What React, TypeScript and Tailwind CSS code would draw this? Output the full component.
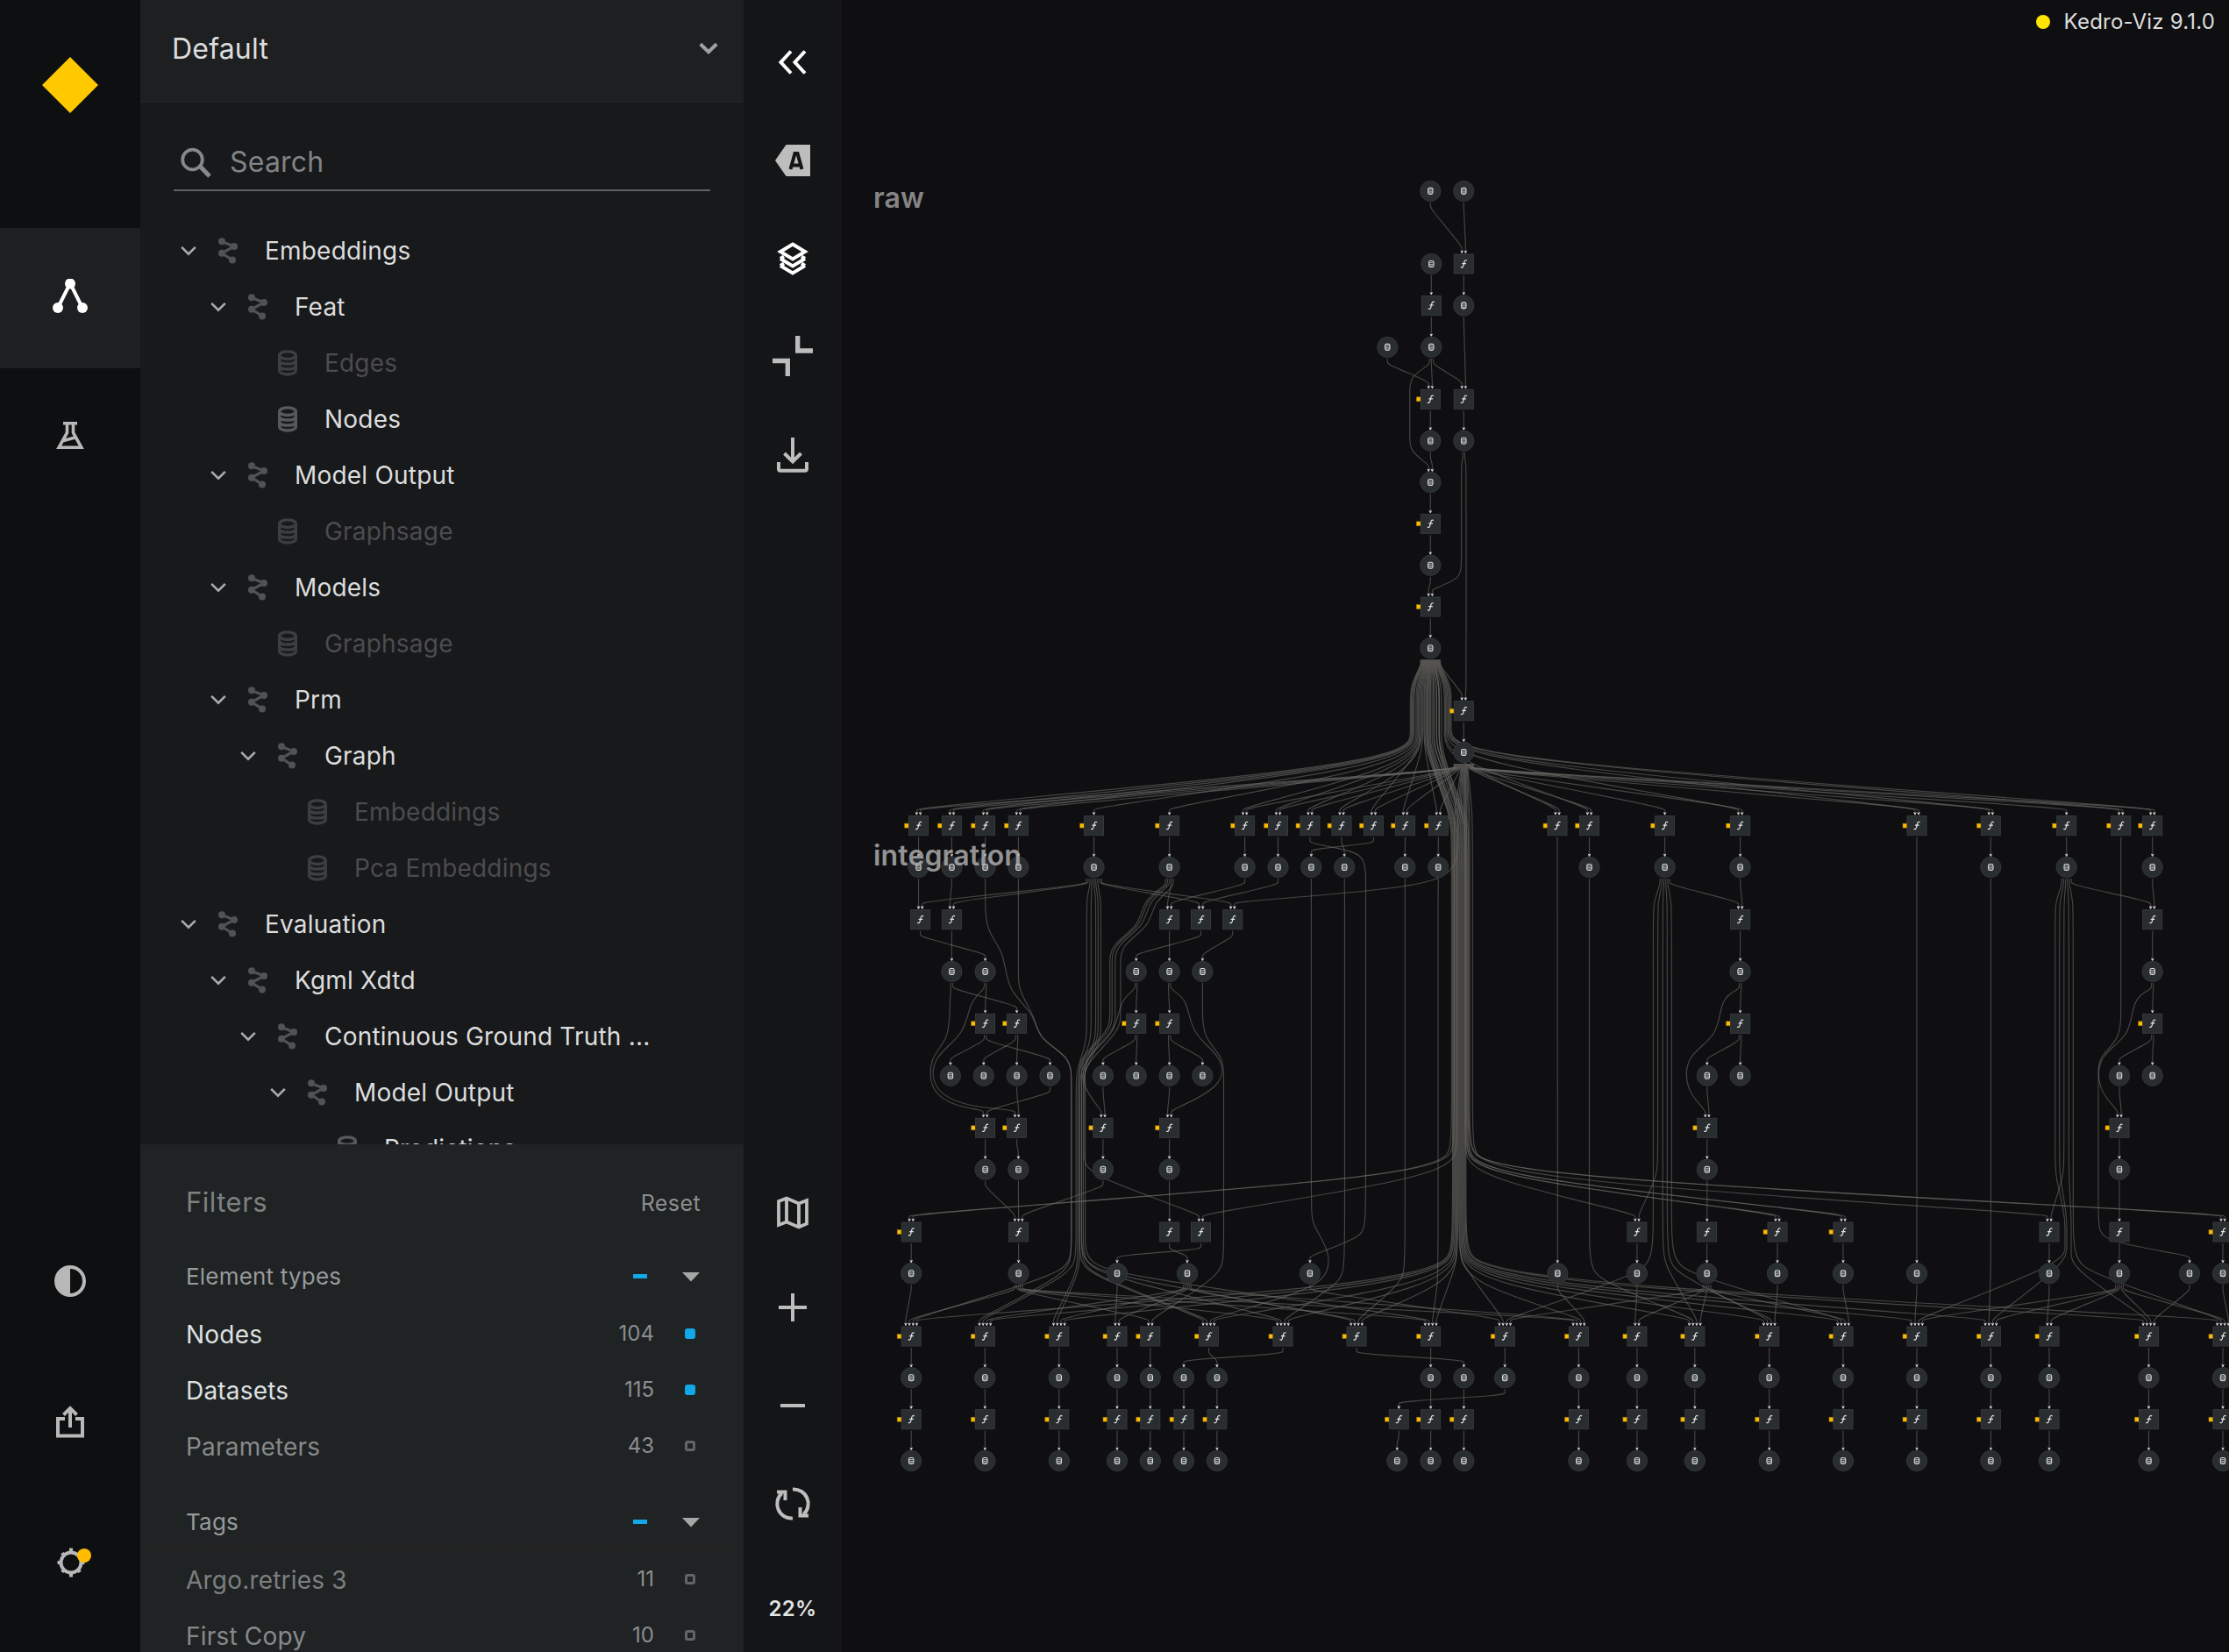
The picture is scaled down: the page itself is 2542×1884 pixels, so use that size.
import React from "react";

/* ---------- Pipeline graph data ---------- */

type Pt = [number, number];
type Edge = { x1: number; r1: number; x2: number; r2: number; via: Pt[] };

const ROWS = [
  217.9, 301, 348.4, 395.9, 455.3, 502.7, 550, 597.3, 644.7, 692, 739.3, 810.7, 858, 941.6, 989, 1048.7, 1108,
  1167.3, 1226.7, 1286.3, 1333.7, 1405, 1452.3, 1524, 1571.3, 1618.7, 1666,
];

const RIGHT = [1800.4, 1866.9, 1932.8, 2017.7, 2102, 2186, 2270.4, 2337, 2450.5, 2535];
const TAIL = [1039.2, 1123.3, 1207.8, 1274, 1311.8];

const DATASETS: Record<number, number[]> = {
  0: [1631.3, 1669.3],
  1: [1632.3],
  2: [1669.3],
  3: [1582.3, 1632.3],
  5: [1631.3, 1669.3],
  6: [1631.3],
  8: [1631.3],
  10: [1631.3],
  12: [1669.3],
  14: [1047.5, 1085.4, 1123.6, 1161.4, 1247.5, 1333.6, 1419.6, 1457.5, 1495.4, 1533.2, 1602.3, 1640.2, 1812.5, 1898.6, 1984.6, 2270.3, 2356.7, 2454.7],
  16: [1085.4, 1123.6, 1295.7, 1333.6, 1371.4, 1984.6, 2454.7],
  18: [1083.9, 1121.8, 1159.6, 1197.5, 1257.9, 1295.7, 1333.6, 1371.4, 1946.8, 1984.6, 2417, 2454.7],
  20: [1123.6, 1161.4, 1257.9, 1333.6, 1946.8, 2417],
  22: [1039.2, 1161.6, 1274, 1354, 1493.9, 1776.3, 1866.9, 1946.6, 2027, 2102, 2186, 2337, 2417, 2497, 2535],
  24: [...TAIL, 1350, 1387.9, 1631.6, 1669.4, 1716.2, ...RIGHT],
  26: [...TAIL, 1350, 1387.9, 1593.3, 1631.6, 1669.4, ...RIGHT],
};

const PLAIN_TASKS: Record<number, number[]> = {
  1: [1669.3],
  2: [1632.3],
  4: [1669.3],
  15: [1049.6, 1085.4, 1333.6, 1369.6, 1405.7, 1984.6, 2454.7],
  21: [1161.6, 1333.7, 1369.5, 1866.9, 1946.6, 2337, 2417],
};

const PARAM_TASKS: Record<number, number[]> = {
  4: [1631.3],
  7: [1631.3],
  9: [1631.3],
  11: [1669.3],
  13: [1047.5, 1085.4, 1123.6, 1161.4, 1247.5, 1333.6, 1419.6, 1457.5, 1494, 1530, 1566.4, 1602.5, 1640.4, 1776, 1812.5, 1898.6, 1984.6, 2186, 2270.3, 2356.7, 2418.7, 2454.7],
  17: [1123.6, 1159.6, 1295.7, 1333.6, 1984.6, 2454.7],
  19: [1123.6, 1159.6, 1257.9, 1333.6, 1946.8, 2417],
  21: [1039.2, 2027, 2102, 2535],
  23: [...TAIL, 1378.4, 1463, 1547, 1631.6, 1716.2, ...RIGHT],
  25: [...TAIL, 1350, 1387.9, 1595.3, 1631.6, 1669.4, ...RIGHT],
};

const run = (x: number, y1: number, y2: number): Pt[] => {
  const d = Math.min(18, (y2 - y1) / 3);
  return [[x, y1], [x, y1 + d], [x, y2 - d], [x, y2]];
};

// soft shoulder between a vertical run and a distant target
const bend = (x: number, tx: number, y: number, k: number): Pt[] => (Math.abs(tx - x) > 90 ? [[x + (tx - x) * k, y]] : []);

const edges: Edge[] = [];
const e = (x1: number, r1: number, x2: number, r2: number, via: Pt[] = []) => edges.push({ x1, r1, x2, r2, via });

// head of the pipeline
e(1631.3, 0, 1669.3, 1);
e(1669.3, 0, 1669.3, 1);
e(1632.3, 1, 1632.3, 2);
e(1669.3, 1, 1669.3, 2);
e(1632.3, 2, 1632.3, 3);
e(1582.3, 3, 1631.3, 4);
e(1632.3, 3, 1631.3, 4);
e(1632.3, 3, 1669.3, 4);
e(1632.3, 3, 1631.3, 6, run(1607.7, 430, 515));
e(1669.3, 2, 1669.3, 4);
e(1631.3, 4, 1631.3, 5);
e(1669.3, 4, 1669.3, 5);
e(1631.3, 5, 1631.3, 6);
e(1631.3, 6, 1631.3, 7);
e(1631.3, 7, 1631.3, 8);
e(1631.3, 8, 1631.3, 9);
e(1669.3, 5, 1631.3, 9, run(1666.6, 530, 660));
e(1669.3, 5, 1669.3, 11, run(1672, 530, 780));
e(1631.3, 9, 1631.3, 10);
e(1631.3, 10, 1669.3, 11);
e(1669.3, 11, 1669.3, 12);

// fan-out towards the model tasks
const FAN_LEFT = [1047.5, 1085.4, 1123.6, 1161.4, 1247.5, 1333.6, 1419.6, 1457.5, 1494, 1530, 1566.4, 1602.5, 1640.4];
const FAN_RIGHT = [1776, 1812.5, 1984.6, 2186, 2270.3, 2418.7, 2454.7];
const LATE = [1039.2, 1123.3, 1207.8, 1378.4, 1463, 1547, 1631.6, 1716.2, 1800.4, 1932.8, 2017.7, 2102, 2186, 2270.4, 2450.5, 2535];
const MID = [1039.2, 1039.2, 1369.5, 1866.9, 2027, 2027, 2102, 2102, 2535, 2535];

FAN_LEFT.forEach((x, i) => {
  const rx = i < 5 ? 1608.4 + i * 1.1 : 1608.4 + i * 1.3;
  e(1631.3, 10, x, 13, [...run(rx, 782, 854), ...bend(rx, x, 879, 0.19)]);
});
[...FAN_RIGHT].reverse().forEach((x, i) => {
  const rx = 1655 - i * 1.3;
  e(1631.3, 10, x, 13, [...run(rx, 782, 850), ...bend(rx, x, 873, 0.16)]);
});
[...FAN_LEFT.filter((x) => x !== 1247.5 && x !== 1333.6), ...FAN_RIGHT, 1898.6, 2356.7].forEach((x) => e(1669.3, 12, x, 13));

LATE.forEach((x, i) => {
  const rx = 1656.5 + i * 1.02;
  const tail = bend(rx, x, 1466, 0.14);
  if (i % 2 === 0 || i < 5) e(1631.3, 10, x, 23, [...run(1625 + i * 1.35, 782, 856), ...run(rx, 935, 1438), ...tail]);
  else e(1669.3, 12, x, 23, [...run(rx, 930, 1438), ...tail]);
});
MID.forEach((x, i) => {
  const rx = i < 3 ? 1655.4 + i * 3 : 1668 + i * 0.9;
  const tail = bend(rx, x, 1345, 0.14);
  if (i % 2 === 0) e(1631.3, 10, x, 21, [...run(1628 + i * 1.7, 782, 856), ...run(rx, 935, 1322), ...tail]);
  else e(1669.3, 12, x, 21, [...run(rx, 930, 1322), ...tail]);
});
e(1669.3, 12, 2337, 21, [...run(1679.3, 930, 1322), ...bend(1679.3, 2337, 1348, 0.14)]);
e(1631.3, 10, 1405.7, 15, [...run(1641, 782, 856), [1662, 915], [1663, 950], [1663, 990], [1630, 1012]]);

// tasks to their outputs
[1047.5, 1085.4, 1123.6, 1161.4, 1247.5, 1333.6, 1419.6, 1457.5, 1602.3, 1640.2, 1812.5, 1898.6, 1984.6, 2270.3, 2356.7, 2454.7].forEach((x) =>
  e(x === 1602.3 ? 1602.5 : x === 1640.2 ? 1640.4 : x, 13, x, 14),
);
e(1494, 13, 1493.9, 22, [[1530, 968], [1557.5, 975], ...run(1557.5, 1005, 1410)]);
e(1530, 13, 1533.2, 14);
e(1566.4, 13, 1495.4, 14);
e(1776, 13, 1776.3, 22);
e(2186, 13, 2186, 22);
e(2418.7, 13, 2497, 22, [[2418.7, 1100], [2418.7, 1150], [2418.7, 1185], [2393, 1205], ...run(2393, 1225, 1415)]);

e(1047.5, 14, 1049.6, 15);
e(1085.4, 14, 1085.4, 15);
e(1123.6, 14, 1039.2, 23, [[1123.6, 1020], [1123.6, 1062], [1146, 1085], [1148, 1130], [1180, 1155], [1183, 1185], [1221.8, 1205], ...run(1221.8, 1235, 1450)]);
e(1161.4, 14, 1123.3, 23, [[1161.4, 1060], [1161.4, 1110], [1161.4, 1130], [1181, 1160], [1184, 1185], [1221.8, 1205], ...run(1221.8, 1235, 1450)]);
e(1247.5, 14, 1049.6, 15);
e(1247.5, 14, 1085.4, 15);
e(1247.5, 14, 1369.6, 15);
e(1247.5, 14, 1405.7, 15);
([[1239.3, 1227.2, 1123.3], [1244.3, 1229.2, 1207.8], [1249.6, 1231.4, 1207.8], [1252.3, 1233.4, 1378.4], [1255.4, 1235.4, 1463]] as const).forEach(([a, b, t]) =>
  e(1247.5, 14, t, 23, [...run(a, 1025, 1188), ...run(b, 1222, 1450)]),
);
([[1265.7, 1231, 1378.4], [1268.2, 1233.6, 1547], [1271.8, 1237.6, 1631.6]] as const).forEach(([a, b, t]) => {
  const s = a - 1270;
  e(1333.6, 14, t, 23, [[1326 + s, 1014], [1307 + s, 1030], [1304 + s, 1056], [a, 1078], ...run(a, 1100, 1175), [b, 1205], ...run(b, 1225, 1450)]);
});
e(1333.6, 14, 1369.5, 21, [[1335, 1014], [1315, 1030], [1312, 1056], [1277.9, 1078], ...run(1277.9, 1100, 1175), ...run(1236, 1215, 1338)]);
e(1333.6, 14, 1333.6, 15);
e(1419.6, 14, 1333.6, 15);
e(1457.5, 14, 1369.6, 15);
e(1495.4, 14, 1378.4, 23, [...run(1495.4, 1030, 1395), [1516, 1425], [1516, 1452], [1494, 1472]]);
e(1533.2, 14, 1463, 23, run(1533.5, 1030, 1460));
e(1602.3, 14, 1547, 23, run(1602.3, 1030, 1460));
e(1640.2, 14, 1631.6, 23, run(1640, 1030, 1460));
e(1812.5, 14, 1932.8, 23, run(1812.5, 1030, 1456));
e(1898.6, 14, 1984.6, 15);
e(1898.6, 14, 1716.2, 23, run(1885.4, 1030, 1448));
e(1898.6, 14, 1866.9, 21, run(1890.6, 1030, 1340));
e(1898.6, 14, 1932.8, 23, run(1896.2, 1030, 1440));
e(1898.6, 14, 2017.7, 23, run(1901.3, 1030, 1448));
e(1898.6, 14, 2102, 23, run(1906.3, 1030, 1448));
e(1984.6, 14, 1984.6, 15);
e(2270.3, 14, 2270.4, 23, run(2270.4, 1030, 1450));
e(2356.7, 14, 2454.7, 15);
e(2356.7, 14, 2186, 23, [...run(2343.7, 1030, 1340), ...run(2355, 1385, 1440)]);
e(2356.7, 14, 2270.4, 23, [...run(2348.7, 1030, 1340), ...run(2357, 1385, 1440)]);
e(2356.7, 14, 2337, 21, run(2353.8, 1030, 1340));
e(2356.7, 14, 2450.5, 23, [...run(2359.3, 1030, 1340), ...run(2362, 1385, 1446)]);
e(2356.7, 14, 2535, 23, run(2364.3, 1030, 1446));
e(2454.7, 14, 2454.7, 15);

e(1049.6, 15, 1123.6, 16);
e(1085.4, 15, 1085.4, 16);
e(1333.6, 15, 1333.6, 16);
e(1369.6, 15, 1295.7, 16);
e(1405.7, 15, 1371.4, 16);

e(1085.4, 16, 1159.6, 17);
e(1085.4, 16, 1123.6, 19, [[1083, 1145], [1083, 1185], [1060, 1205], [1060, 1245], [1090, 1262]]);
e(1123.6, 16, 1123.6, 17);
e(1123.6, 16, 1159.6, 19, [[1105, 1143], [1101, 1180], [1062.5, 1205], [1062.5, 1243], [1100, 1262]]);
e(1295.7, 16, 1295.7, 17);
e(1295.7, 16, 1257.9, 19, [[1276, 1142], [1274, 1178], [1234, 1208], [1234, 1240]]);
e(1333.6, 16, 1333.6, 17);
e(1333.6, 16, 1333.6, 19, [[1355, 1140], [1358, 1180], [1395.5, 1205], [1395.5, 1240]]);
e(1371.4, 16, 1311.8, 23, [[1371.4, 1150], [1371.4, 1183], [1395.5, 1205], ...run(1395.5, 1230, 1452)]);
e(1123.6, 17, 1083.9, 18);
e(1123.6, 17, 1197.5, 18);
e(1159.6, 17, 1121.8, 18);
e(1159.6, 17, 1159.6, 18);
e(1295.7, 17, 1257.9, 18);
e(1295.7, 17, 1295.7, 18);
e(1333.6, 17, 1333.6, 18);
e(1333.6, 17, 1371.4, 18);
e(1197.5, 18, 1123.6, 19);
e(1159.6, 18, 1159.6, 19);
e(1257.9, 18, 1257.9, 19);
e(1333.6, 18, 1333.6, 19);
e(1123.6, 19, 1123.6, 20);
e(1159.6, 19, 1161.4, 20);
e(1257.9, 19, 1257.9, 20);
e(1333.6, 19, 1333.6, 20);
e(1123.6, 20, 1161.6, 21);
e(1161.4, 20, 1161.6, 21);
e(1257.9, 20, 1161.6, 21);
e(1333.6, 20, 1333.7, 21);

// the two evaluation branches on the right
[1984.6, 2454.7].forEach((x) => {
  const l = x - 37.8;
  e(x, 15, x, 16);
  e(x, 16, x, 17);
  e(x, 16, l, 19, [[x - 23, 1138], [x - 24, 1182], [x - 62.5, 1203], [x - 62.5, 1243]]);
  e(x, 17, l, 18);
  e(x, 17, x, 18);
  const s = x === 1984.6 ? 1946.8 : 2417;
  e(s, 18, s, 19);
  e(s, 19, s, 20);
  e(s, 20, s, 21);
});

// collection of predictions
[1039.2, 1161.6, 1866.9, 1946.6, 2027, 2102, 2337, 2417, 2535].forEach((x) => e(x, 21, x, 22));
e(1333.7, 21, 1354, 22);
e(1369.5, 21, 1274, 22);
const fan = (x: number, targets: number[]) => targets.forEach((t) => e(x, 22, t, 23));
fan(1039.2, [1039.2]);
fan(1161.6, [1039.2, 1311.8, 1463, 1631.6, 1800.4]);
fan(1274, [1274]);
fan(1354, [1123.3, 1207.8, 1274, 1547, 1800.4]);
fan(1493.9, [1716.2]);
fan(1776.3, [1800.4]);
fan(1866.9, [1866.9]);
fan(1946.6, [1716.2, 1866.9, 1932.8, 2017.7, 2102]);
fan(2027, [2017.7]);
fan(2102, [2102]);
fan(2186, [2186]);
fan(2337, [2337]);
fan(2417, [2186, 2270.4, 2337, 2450.5, 2535]);
fan(2497, [2450.5]);
fan(2535, [2535]);
[...TAIL, 1631.6, 1716.2, ...RIGHT].forEach((x) => e(x, 23, x, 24));
e(1378.4, 23, 1387.9, 24);
e(1463, 23, 1350, 24);
e(1547, 23, 1669.4, 24);
[...TAIL, 1350, 1387.9, 1631.6, 1669.4, ...RIGHT].forEach((x) => {
  e(x, 24, x, 25);
  e(x, 25, x, 26);
});
e(1716.2, 24, 1595.3, 25);
e(1595.3, 25, 1593.3, 26);

/* ---------- Edge routing ---------- */

const f1 = (n: number) => Math.round(n * 10) / 10;

function basis(p: Pt[]): string {
  let d = `M${f1(p[0][0])},${f1(p[0][1])}`;
  d += `L${f1((5 * p[0][0] + p[1][0]) / 6)},${f1((5 * p[0][1] + p[1][1]) / 6)}`;
  const q = [...p, p[p.length - 1]];
  for (let i = 2; i < q.length; i++) {
    const [a, b, c] = [q[i - 2], q[i - 1], q[i]];
    d += `C${f1((2 * a[0] + b[0]) / 3)},${f1((2 * a[1] + b[1]) / 3)} ${f1((a[0] + 2 * b[0]) / 3)},${f1((a[1] + 2 * b[1]) / 3)} ${f1((a[0] + 4 * b[0] + c[0]) / 6)},${f1((a[1] + 4 * b[1] + c[1]) / 6)}`;
  }
  const l = p[p.length - 1];
  return d + `L${f1(l[0])},${f1(l[1])}`;
}

function spread(key: (k: Edge) => string, angle: (k: Edge) => number, gap: number, max: number) {
  const groups = new Map<string, Edge[]>();
  edges.forEach((k) => groups.set(key(k), [...(groups.get(key(k)) ?? []), k]));
  const out = new Map<Edge, number>();
  groups.forEach((g) => {
    g.sort((a, b) => angle(a) - angle(b));
    const s = g.length > 1 ? Math.min(gap, max / (g.length - 1)) : 0;
    g.forEach((k, i) => out.set(k, (i - (g.length - 1) / 2) * s));
  });
  return out;
}

const srcOffset = spread(
  (k) => `${Math.round(k.x1)}:${k.r1}`,
  (k) => {
    const n = k.via[0] ?? [k.x2, ROWS[k.r2]];
    return Math.atan2(n[0] - k.x1, n[1] - ROWS[k.r1]) + (k.x2 - k.x1) * 1e-6;
  },
  2.2,
  22.5,
);
const dstOffset = spread(
  (k) => `${Math.round(k.x2)}:${k.r2}`,
  (k) => {
    const n = k.via[k.via.length - 1] ?? [k.x1, ROWS[k.r1]];
    return Math.atan2(n[0] - k.x2, ROWS[k.r2] - n[1]);
  },
  4.2,
  16,
);

const DRAWN = edges.map((k) => {
  const sx = k.x1 + (srcOffset.get(k) ?? 0);
  const tx = k.x2 + (dstOffset.get(k) ?? 0);
  const y1 = ROWS[k.r1] + 13;
  const y2 = ROWS[k.r2] - 14.5;
  const p: Pt[] = [[sx, y1], [sx, y1 + 4], [sx, y1 + 7], ...k.via, [tx, y2 - 6], [tx, y2 - 3], [tx, y2]];
  return { d: basis(p), tx, ty: y2 };
});

const LINES = DRAWN.map((k) => k.d);
const ARROWS = DRAWN.map((k) => `M${f1(k.tx - 1.8)},${f1(k.ty - 1)}l1.8,0.9l1.8,-0.9l-1.3,3.2h-1z`).join("");

const flat = (m: Record<number, number[]>) => Object.entries(m).flatMap(([r, xs]) => xs.map((x): Pt => [x, ROWS[Number(r)]]));

function Task({ at: [x, y], params }: { at: Pt; params?: boolean }) {
  return (
    <g transform={`translate(${x} ${y})`}>
      {params && <rect x="-16" y="-2.5" width="5" height="5" fill="#ffbc00" stroke="#8a6a10" strokeWidth="0.6" />}
      <rect x="-11" y="-11" width="22" height="22" fill="#292d30" stroke="#36393b" strokeWidth="1" />
      <path d="M-3.4 3.6C-1.6 4.8-.7 3.4-.3 1.4L.5-2C.9-4 2-4.8 3.6-3.8M-2 -.4H2.6" fill="none" stroke="#e4e5e6" strokeWidth="1.2" />
    </g>
  );
}

function Dataset({ at: [x, y] }: { at: Pt }) {
  return (
    <g transform={`translate(${x} ${y})`}>
      <circle r="11.7" fill="#292d30" stroke="#36393b" strokeWidth="0.8" />
      <rect x="-2.7" y="-3.5" width="5.4" height="7" rx="1.8" fill="none" stroke="#dfe0e1" strokeWidth="1.1" />
      <path d="M-2.4 -1.4H2.4M-2.4 .4H2.4M-2.4 2H2.4" stroke="#c9cacb" strokeWidth="0.8" />
    </g>
  );
}

function Graph() {
  return (
    <svg className="absolute inset-0" width="1582" height="1884" viewBox="960 0 1582 1884">
      <g fill="none" stroke="#6d6b68" strokeOpacity="0.6" strokeWidth="1.15">
        {LINES.map((d, i) => (
          <path key={i} d={d} />
        ))}
      </g>
      <path d={ARROWS} fill="#d8d9da" />
      {flat(DATASETS).map((p, i) => (
        <Dataset key={i} at={p} />
      ))}
      {flat(PLAIN_TASKS).map((p, i) => (
        <Task key={i} at={p} />
      ))}
      {flat(PARAM_TASKS).map((p, i) => (
        <Task key={i} at={p} params />
      ))}
    </svg>
  );
}

/* ---------- Sidebar ---------- */

type Item = { label: string; depth: number; leaf?: boolean; off?: boolean };

const TREE: Item[] = [
  { label: "Embeddings", depth: 0 },
  { label: "Feat", depth: 1 },
  { label: "Edges", depth: 2, leaf: true, off: true },
  { label: "Nodes", depth: 2, leaf: true },
  { label: "Model Output", depth: 1 },
  { label: "Graphsage", depth: 2, leaf: true, off: true },
  { label: "Models", depth: 1 },
  { label: "Graphsage", depth: 2, leaf: true, off: true },
  { label: "Prm", depth: 1 },
  { label: "Graph", depth: 2 },
  { label: "Embeddings", depth: 3, leaf: true, off: true },
  { label: "Pca Embeddings", depth: 3, leaf: true, off: true },
  { label: "Evaluation", depth: 0 },
  { label: "Kgml Xdtd", depth: 1 },
  { label: "Continuous Ground Truth ...", depth: 2 },
  { label: "Model Output", depth: 3 },
  { label: "Predictions", depth: 4, leaf: true },
];

const PipelineIcon = () => (
  <svg width="24" height="32" viewBox="0 0 24 32" fill="#505254" stroke="#505254" className="shrink-0">
    <path d="M5 5.5L19 11L5 18.7L17 26.5" fill="none" strokeWidth="3.2" />
    <g stroke="none">
      <circle cx="5" cy="5.2" r="4" />
      <circle cx="19" cy="11" r="4" />
      <circle cx="5" cy="18.8" r="4" />
      <circle cx="17" cy="26.6" r="4" />
    </g>
  </svg>
);

const DatabaseIcon = ({ off }: { off?: boolean }) => (
  <svg width="24" height="32" viewBox="0 0 24 32" fill="none" stroke={off ? "#3c3e3f" : "#57595b"} strokeWidth="3.4" className="shrink-0">
    <ellipse cx="12" cy="7.2" rx="9.3" ry="4.3" />
    <path d="M2.7 7.2V24.5C2.7 27.2 6.8 29 12 29S21.3 27.2 21.3 24.5V7.2M2.7 13.2C2.7 15.6 6.8 17 12 17S21.3 15.6 21.3 13.2M2.7 19.2C2.7 21.6 6.8 23 12 23S21.3 21.6 21.3 19.2" />
  </svg>
);

function TreeRow({ item }: { item: Item }) {
  return (
    <div className="flex h-16 shrink-0 items-center pl-[46px]">
      <div className="flex items-center" style={{ marginLeft: item.depth * 34 }}>
        <span className="flex w-[42px] shrink-0">
          {!item.leaf && (
            <svg width="18" height="12" viewBox="0 0 18 12" fill="none" stroke="#aaabac" strokeWidth="2.6">
              <path d="M1.2 1.8L9 9.6L16.8 1.8" />
            </svg>
          )}
        </span>
        {item.leaf ? <DatabaseIcon off={item.off} /> : <PipelineIcon />}
        <span className={`ml-[30px] whitespace-nowrap text-[28px] leading-none tracking-[0.2px] ${item.off ? "text-[#4b4c4e]" : "text-[#dcddde]"}`}>{item.label}</span>
      </div>
    </div>
  );
}

function FilterGroup({ title }: { title: string }) {
  return (
    <div className="flex h-[68px] shrink-0 items-center bg-linear-to-b from-[#1f2324] from-60% to-[#222223] pl-[52px] pr-[50px]">
      <span className="flex-1 pt-[2px] text-[26px] leading-none tracking-[0.2px] text-[#979a9a]">{title}</span>
      <span className="mr-10 h-[5px] w-4 bg-[#12a8e8]" />
      <svg width="20" height="11" viewBox="0 0 20 11" fill="#a5a7a7" className="mt-[2px]">
        <path d="M0 0H20L10 10.5Z" />
      </svg>
    </div>
  );
}

function FilterRow({ label, count, on, dim }: { label: string; count: string; on?: boolean; dim?: boolean }) {
  const tone = on ? "text-[#dfe0e0]" : dim ? "text-[#7c7f7f]" : "text-[#878a8a]";
  return (
    <div className="flex h-16 shrink-0 items-center pl-[52px] pr-[55px]">
      <span className={`flex-1 pt-[2px] text-[28px] leading-none tracking-[0.2px] ${tone}`}>{label}</span>
      <span className="mr-[35px] pb-px text-[24px] leading-none text-[#8b8e8e]">{count}</span>
      <span className={on ? "size-3 rounded-[3px] bg-[#12a8e8]" : "size-3 rounded-[3px] border-[3px] border-[#626565]"} />
    </div>
  );
}

function Sidebar() {
  return (
    <section className="flex h-full w-[688px] shrink-0 flex-col bg-[#18191b]">
      <header className="flex h-[117px] shrink-0 items-start justify-between border-b-2 border-[#222325] bg-[#1e1f21] pl-[36px] pr-[29px]">
        <span className="mt-10 text-[32px] leading-8 tracking-[0.2px] text-[#dcddde]">Default</span>
        <svg width="22" height="14" viewBox="0 0 22 14" fill="none" stroke="#a0a1a2" strokeWidth="4" className="mt-12">
          <path d="M1.8 2.2L11 11.2L20.2 2.2" />
        </svg>
      </header>
      <div className="ml-[38px] flex h-[101px] w-[612px] shrink-0 items-end border-b-2 border-[#606163] pb-[13px]">
        <svg width="38" height="36" viewBox="0 0 38 36" fill="none" stroke="#87888a" className="ml-[6px]">
          <circle cx="15.5" cy="15" r="11.3" strokeWidth="3.8" />
          <path d="M23.5 22L35 34" strokeWidth="5" />
        </svg>
        <span className="ml-[20px] text-[32px] leading-9 tracking-[0.2px] text-[#828385]">Search</span>
      </div>
      <div className="flex h-[1087px] shrink-0 flex-col overflow-hidden pt-9">
        {TREE.map((t, i) => (
          <TreeRow key={i} item={t} />
        ))}
      </div>
      <div className="flex flex-1 flex-col overflow-hidden bg-[#1f2324]">
        <div className="mt-[38px] flex h-[54px] shrink-0 items-center justify-between pl-[52px] pr-[49px]">
          <span className="text-[31px] leading-none tracking-[0.5px] text-[#7d8181]">Filters</span>
          <span className="pt-[4px] text-[25px] leading-none tracking-[0.4px] text-[#8b8e8e]">Reset</span>
        </div>
        <div className="h-[24px] shrink-0" />
        <FilterGroup title="Element types" />
        <FilterRow label="Nodes" count="104" on />
        <FilterRow label="Datasets" count="115" on />
        <FilterRow label="Parameters" count="43" />
        <div className="h-[20px] shrink-0" />
        <FilterGroup title="Tags" />
        <FilterRow label="Argo.retries 3" count="11" dim />
        <FilterRow label="First Copy" count="10" />
      </div>
    </section>
  );
}

/* ---------- Navigation rail ---------- */

function NavCell({ children, className = "" }: { children: React.ReactNode; className?: string }) {
  return <div className={`flex size-40 shrink-0 items-center justify-center ${className}`}>{children}</div>;
}

function NavRail() {
  return (
    <nav className="flex h-full w-40 shrink-0 flex-col bg-[#0e0f11]">
      <div className="flex h-[260px] shrink-0 justify-center pt-[65px]">
        <svg width="64" height="64" viewBox="0 0 64 64">
          <path d="M32 0L64 32L32 64L0 32Z" fill="#ffc900" />
        </svg>
      </div>
      <NavCell className="bg-[#1d1f21]">
        <svg width="44" height="44" viewBox="0 0 44 44" fill="#fff" stroke="#fff">
          <path d="M8 33L22 5L36 33" fill="none" strokeWidth="4" />
          <g stroke="none">
            <circle cx="22" cy="5.5" r="6" />
            <circle cx="8" cy="33" r="6" />
            <circle cx="36" cy="33" r="6" />
          </g>
        </svg>
      </NavCell>
      <NavCell className="pb-[6px]">
        <svg width="34" height="34" viewBox="0 0 34 34" fill="none" stroke="#b8b8b8" strokeWidth="3.6">
          <path d="M9 2.8H25M13.5 3V13.5L4.2 30.2H29.8L20.5 13.5V3M9.5 22.5L22.5 19" />
        </svg>
      </NavCell>
      <div className="flex-1" />
      <NavCell>
        <svg width="36" height="36" viewBox="0 0 36 36">
          <circle cx="18" cy="18" r="16" fill="none" stroke="#b8b8b8" strokeWidth="4" />
          <path d="M18 2A16 16 0 0 0 18 34Z" fill="#b8b8b8" />
        </svg>
      </NavCell>
      <NavCell>
        <svg width="36" height="40" viewBox="0 0 36 40" fill="none" stroke="#b8b8b8" strokeWidth="4">
          <path d="M12 17H4V36.5H32V17H24M18 27V6M10.5 12.5L18 5L25.5 12.5" />
        </svg>
      </NavCell>
      <NavCell className="pt-[2px]">
        <svg width="56" height="40" viewBox="0 0 56 40">
          <g stroke="#b8b8b8" strokeWidth="4">
            <circle cx="29" cy="20" r="11.5" fill="none" />
            <path d="M29 3.5V8M29 32V36.5M13.5 20H18M40 20H44.5M19 9L21 12M39 31L37 28M19 31L21 28" fill="none" />
          </g>
          <circle cx="44" cy="12" r="8" fill="#ffbc00" />
        </svg>
      </NavCell>
      <div className="h-[23px] shrink-0" />
    </nav>
  );
}

/* ---------- Toolbar ---------- */

function Tool({ children }: { children: React.ReactNode }) {
  return (
    <div className="flex h-28 w-full shrink-0 items-center justify-center">
      <svg width="48" height="48" viewBox="0 0 48 48" fill="none" stroke="#bdbdbd" strokeWidth="4">
        {children}
      </svg>
    </div>
  );
}

function Toolbar() {
  return (
    <aside className="flex h-full w-28 shrink-0 flex-col bg-[#141517] pt-[15px]">
      <Tool>
        <path d="M22 11.5L10.5 24L22 36.5M38 11.5L26.5 24L38 36.5" stroke="#fff" strokeWidth="4" />
      </Tool>
      <Tool>
        <path d="M4 24L16.5 6H44V42H16.5Z" fill="#bdbdbd" stroke="none" />
        <path d="M21.5 34L26.5 16H29.5L34.5 34M23 29.5H33" stroke="#141517" strokeWidth="4" />
      </Tool>
      <Tool>
        <path d="M24 7.5L38 16L24 24.5L10 16ZM10 24L24 32.5L38 24M10 32L24 40.5L38 32" stroke="#fff" strokeWidth="4" />
        <path d="M10 24L14 21.5M38 24L34 21.5M10 32L14 29.5M38 32L34 29.5" stroke="#fff" strokeWidth="4" />
      </Tool>
      <Tool>
        <path d="M29.7 0V17H47M1 28.5H18.3V46" strokeWidth="5.3" />
      </Tool>
      <Tool>
        <path d="M24 4V32M14.5 22L24 31.5L33.5 22M8 32V39.5C8 41 8.8 41.7 10 41.7H38C39.2 41.7 40 41 40 39.5V32" />
      </Tool>
      <div className="flex-1" />
      <Tool>
        <path d="M8 15L17 11.5L31 17.5L40 14V40.5L31 44.5L17 38.5L8 42ZM17 12V38M31 18V44" strokeWidth="3.8" />
      </Tool>
      <Tool>
        <path d="M24 8V40M8 24H40" />
      </Tool>
      <Tool>
        <path d="M10 24H38" />
      </Tool>
      <Tool>
        <path d="M24 7.5A16.5 16.5 0 0 1 36.5 36M24 40.5A16.5 16.5 0 0 1 11.5 12M6 10.5H15.5V20M42 37.5H32.5V28" />
      </Tool>
      <div className="flex h-[113px] shrink-0 items-center justify-center pt-[14px] text-[24px] font-semibold tracking-[0.4px] text-[#e3e4e4]">22%</div>
    </aside>
  );
}

export default function App() {
  return (
    <div className="flex h-[1884px] w-[2542px] overflow-hidden bg-[#0f0f11] font-['Inter',sans-serif]">
      <NavRail />
      <Sidebar />
      <Toolbar />
      <main className="relative flex-1 overflow-hidden">
        <Graph />
        <span className="absolute left-[36px] top-[206px] text-[32px] font-semibold leading-10 tracking-[0.15px] text-[#a3a3a4] opacity-80">raw</span>
        <span className="absolute left-[36px] top-[956px] text-[32px] font-semibold leading-10 tracking-[0.15px] text-[#b4b4b5] opacity-80">integration</span>
        <div className="absolute right-4 top-[9px] flex items-center gap-4 text-[24px] leading-8 tracking-[0.2px] text-[#dcddde]">
          <span className="size-4 rounded-full bg-[#ffe500]" />
          Kedro-Viz 9.1.0
        </div>
      </main>
    </div>
  );
}
